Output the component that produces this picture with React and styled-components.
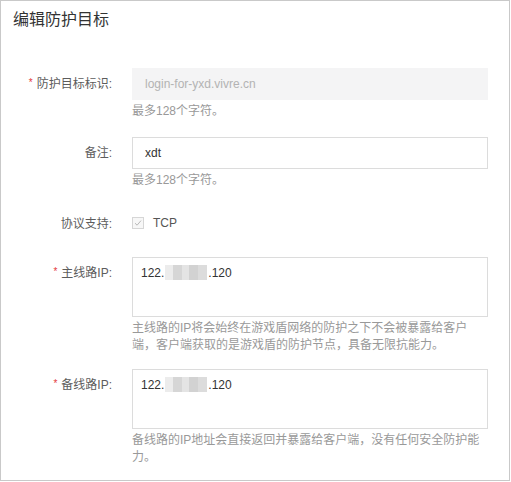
import React from 'react';
import styled, { createGlobalStyle } from 'styled-components';

const GlobalStyle = createGlobalStyle`
  html, body {
    margin: 0;
    padding: 0;
    background: #ffffff;
  }
  body {
    font-family: "Liberation Sans", "Noto Sans CJK SC", sans-serif;
    -webkit-font-smoothing: antialiased;
  }
`;

const Panel = styled.div`
  box-sizing: border-box;
  width: 510px;
  height: 481px;
  border: 1px solid #c9c9c9;
  background: #fff;
  overflow: hidden;
`;

const Title = styled.h3`
  margin: 0;
  padding: 7px 12px 0;
  font-size: 16px;
  line-height: 24px;
  font-weight: normal;
  color: #333;
`;

const Form = styled.div`
  padding-top: 36px;
`;

const Item = styled.div`
  display: flex;
  align-items: flex-start;
  margin-bottom: ${p => p.$gap ?? 17}px;
`;

const Label = styled.div`
  flex: 0 0 131px;
  box-sizing: border-box;
  padding-right: 20px;
  text-align: right;
  font-size: 12px;
  line-height: 32px;
  color: #5c5c5c;
  white-space: nowrap;
`;

const Star = styled.span`
  color: #e4393c;
  font-size: 10px;
  margin-right: 4px;
  position: relative;
  top: -2px;
`;

const Control = styled.div`
  width: 356px;
`;

const TextInput = styled.input`
  box-sizing: border-box;
  display: block;
  width: 100%;
  height: 32px;
  padding: 0 12px;
  font-family: inherit;
  font-size: 12px;
  color: #333;
  background: #fff;
  border: 1px solid #dcdcdc;
  border-radius: 0;
  outline: none;

  &:disabled {
    background: #f4f4f5;
    border-color: #f4f4f5;
    color: #b3b3b3;
  }
`;

const TextArea = styled.div`
  box-sizing: border-box;
  height: 60px;
  padding: 6px 8px;
  font-size: 12px;
  line-height: 18px;
  color: #333;
  border: 1px solid #dcdcdc;
`;

const Masked = styled.span`
  display: inline-block;
  width: 42px;
  height: 15px;
  margin: 0 1px;
  vertical-align: -3px;
  background: linear-gradient(
    90deg,
    #ececec 0 8px,
    #d6d6d6 8px 17px,
    #e4e4e4 17px 24px,
    #d2d2d2 24px 33px,
    #dcdcdc 33px 42px
  );
`;

const Help = styled.div`
  margin-top: 3px;
  font-size: 12px;
  line-height: 17px;
  color: #999;
`;

const CheckRow = styled.label`
  display: flex;
  align-items: center;
  gap: 9px;
  height: 30px;
  font-size: 12px;
  color: #555;
`;

const CheckBox = styled.span`
  box-sizing: border-box;
  display: inline-flex;
  align-items: center;
  justify-content: center;
  width: 12px;
  height: 12px;
  border: 1px solid #d6d6d6;
  background: #f7f7f7;
`;

const Check = () => (
  <CheckBox>
    <svg width="8" height="8" viewBox="0 0 8 8" fill="none">
      <path d="M1 4.2 L3.1 6.2 L7 1.6" stroke="#b8b8b8" strokeWidth="1" />
    </svg>
  </CheckBox>
);

const IpValue = () => (
  <>
    122.<Masked />.120
  </>
);

const App = () => (
  <>
    <GlobalStyle />
    <Panel>
      <Title>编辑防护目标</Title>
      <Form>
        <Item>
          <Label>
            <Star>*</Star>防护目标标识:
          </Label>
          <Control>
            <TextInput value="login-for-yxd.vivre.cn" disabled readOnly />
            <Help>最多128个字符。</Help>
          </Control>
        </Item>

        <Item $gap={19}>
          <Label>备注:</Label>
          <Control>
            <TextInput value="xdt" readOnly />
            <Help>最多128个字符。</Help>
          </Control>
        </Item>

        <Item $gap={17}>
          <Label>协议支持:</Label>
          <Control>
            <CheckRow>
              <Check />
              TCP
            </CheckRow>
          </Control>
        </Item>

        <Item $gap={15}>
          <Label>
            <Star>*</Star>主线路IP:
          </Label>
          <Control>
            <TextArea>
              <IpValue />
            </TextArea>
            <Help>主线路的IP将会始终在游戏盾网络的防护之下不会被暴露给客户端，客户端获取的是游戏盾的防护节点，具备无限抗能力。</Help>
          </Control>
        </Item>

        <Item>
          <Label>
            <Star>*</Star>备线路IP:
          </Label>
          <Control>
            <TextArea>
              <IpValue />
            </TextArea>
            <Help>备线路的IP地址会直接返回并暴露给客户端，没有任何安全防护能力。</Help>
          </Control>
        </Item>
      </Form>
    </Panel>
  </>
);

export default App;
